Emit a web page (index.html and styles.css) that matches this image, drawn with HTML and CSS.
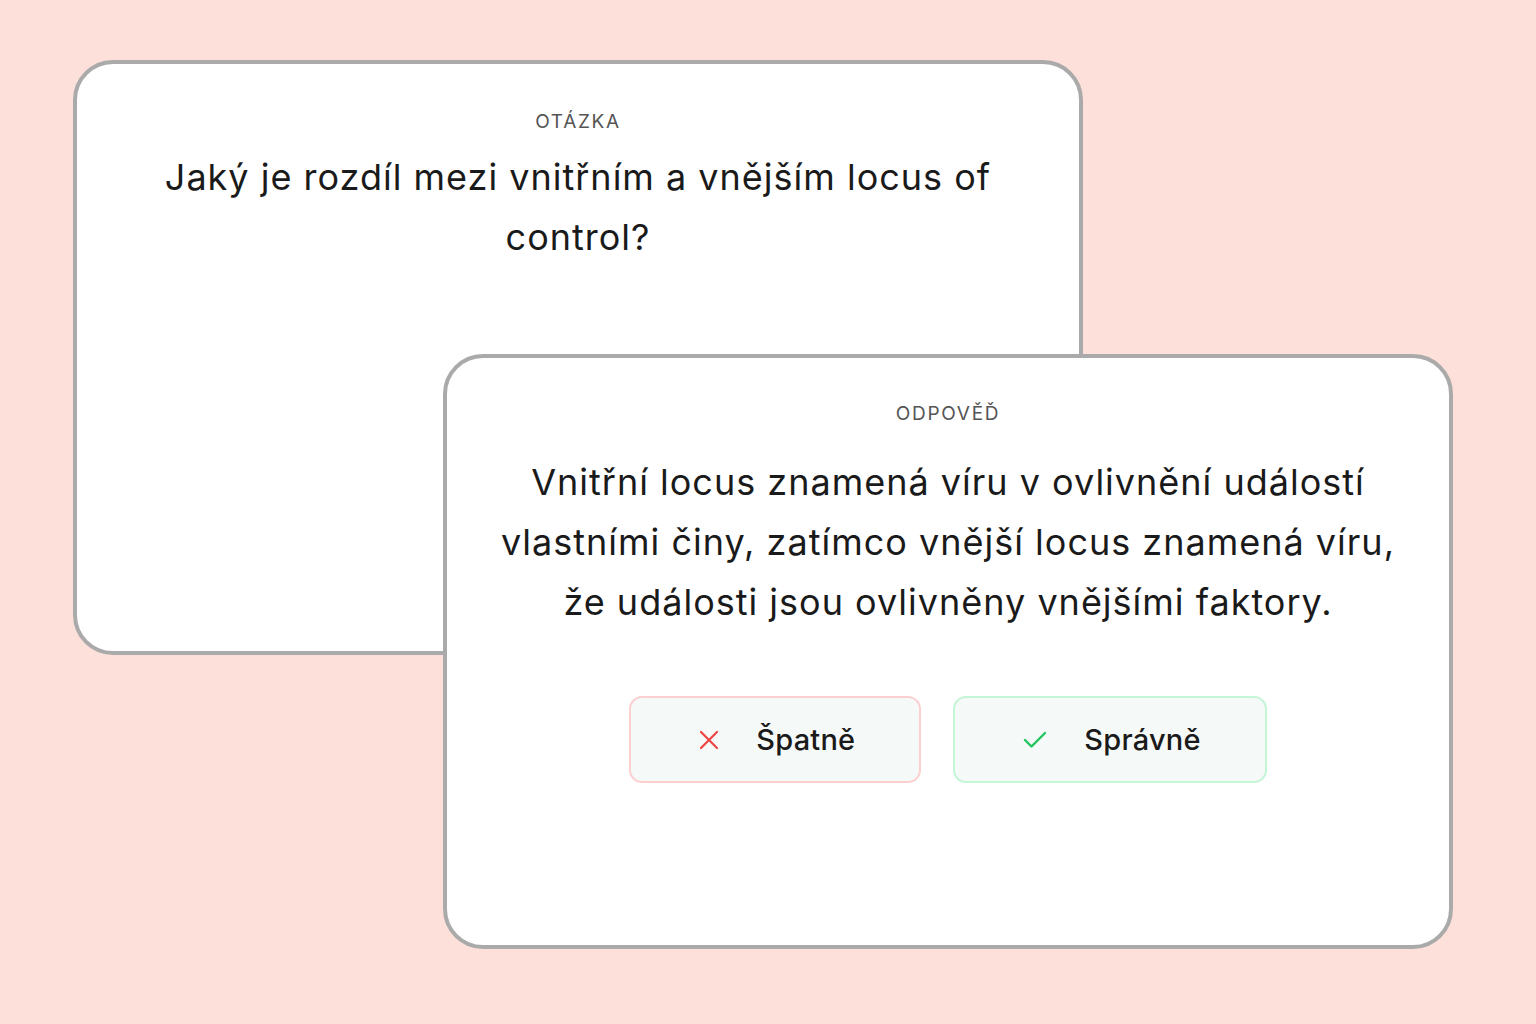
FILE: index.html
```html
<!DOCTYPE html>
<html lang="cs">
<head>
<meta charset="utf-8">
<title>Kartičky</title>
<link rel="stylesheet" href="styles.css">
</head>
<body>
<main class="stage">
  <section class="card card-question">
    <div class="label">OTÁZKA</div>
    <p class="question">Jaký je rozdíl mezi vnitřním a vnějším locus of control?</p>
  </section>
  <section class="card card-answer">
    <div class="label">ODPOVĚĎ</div>
    <p class="answer">Vnitřní locus znamená víru v ovlivnění událostí vlastními činy, zatímco vnější locus znamená víru, že události jsou ovlivněny vnějšími faktory.</p>
    <div class="actions">
      <button class="btn btn-wrong" type="button">
        <svg class="icon" width="20" height="20" viewBox="0 0 20 20" fill="none" stroke="#ef4444" stroke-width="2.2" stroke-linecap="round"><path d="M2 2 L18 18 M18 2 L2 18"/></svg>
        <span>Špatně</span>
      </button>
      <button class="btn btn-right" type="button">
        <svg class="icon" width="24" height="20" viewBox="0 0 24 20" fill="none" stroke="#22c55e" stroke-width="2.4" stroke-linecap="round" stroke-linejoin="round"><path d="M2 10 L8.5 16.5 L22 3"/></svg>
        <span>Správně</span>
      </button>
    </div>
  </section>
</main>
</body>
</html>
```
FILE: styles.css
```css
* { box-sizing: border-box; }
html, body { margin: 0; padding: 0; }
body {
  background: #fce0d9;
  font-family: "Inter", "Noto Sans", sans-serif;
  color: #1b1b1b;
  width: 1536px;
  height: 1024px;
  overflow: hidden;
}
.stage {
  display: grid;
  grid-template-columns: 370px 640px 370px;
  grid-template-rows: 294px 301px 294px;
  padding: 60px 0 0 73px;
}
.card {
  background: #ffffff;
  border: 4px solid #aaaaaa;
  border-radius: 40px;
  display: flex;
  flex-direction: column;
  align-items: center;
  text-align: center;
}
.card-question {
  grid-column: 1 / 3;
  grid-row: 1 / 3;
  padding-top: 46px;
}
.card-answer {
  grid-column: 2 / 4;
  grid-row: 2 / 4;
  padding-top: 44px;
}
.label {
  font-size: 19px;
  line-height: 24px;
  letter-spacing: 1.7px;
  color: #555555;
}
.question, .answer {
  margin: 0;
  font-size: 36px;
  line-height: 60px;
  letter-spacing: 1px;
  font-weight: 400;
  color: #1a1a1a;
}
.question {
  margin-top: 13px;
  max-width: 880px;
}
.answer {
  margin-top: 26px;
  max-width: 925px;
}
.actions {
  display: flex;
  gap: 32px;
  margin-top: 64px;
}
.btn {
  display: flex;
  align-items: center;
  gap: 37px;
  height: 87px;
  padding: 0 64px 0 68px;
  background: #f5f9f7;
  border: 2px solid;
  border-radius: 13px;
  font-family: inherit;
  font-size: 29px;
  letter-spacing: 0.2px;
  font-weight: 500;
  color: #1a1a1a;
}
.btn-wrong { border-color: #fcd0d0; }
.btn-right { border-color: #c4f5d6; }
.icon { display: block; }
```
